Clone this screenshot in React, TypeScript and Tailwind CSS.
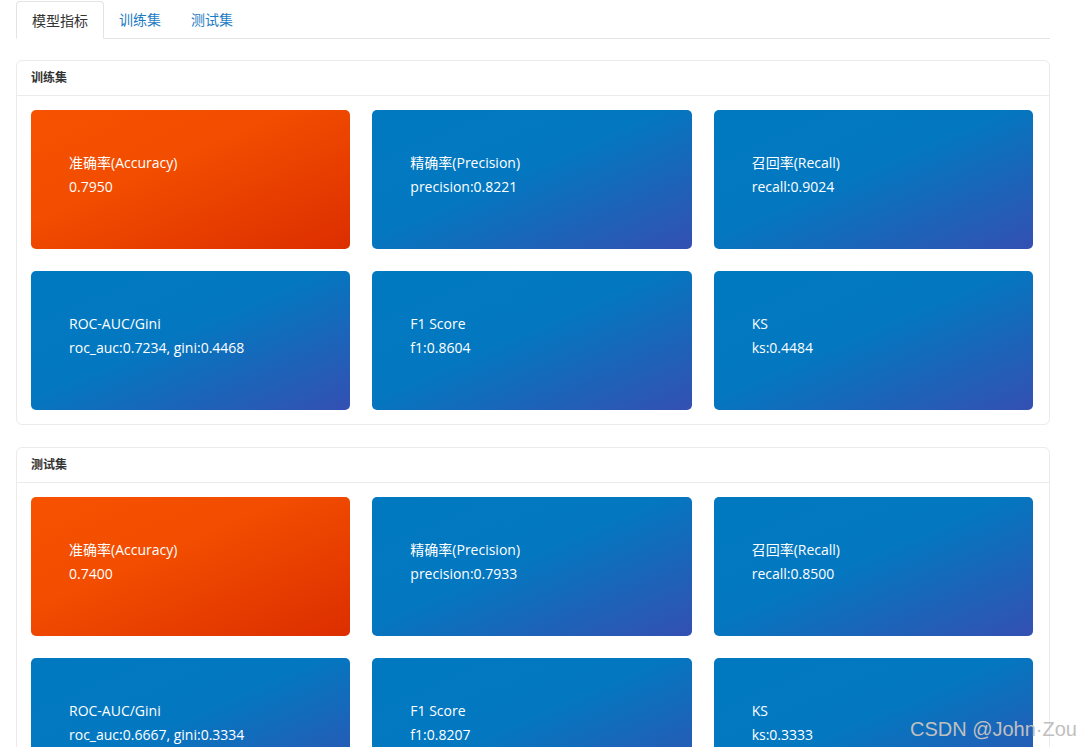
import React from "react";

type M = { title: string; value: string; orange?: boolean };

const train: M[] = [
  { title: "准确率(Accuracy)", value: "0.7950", orange: true },
  { title: "精确率(Precision)", value: "precision:0.8221" },
  { title: "召回率(Recall)", value: "recall:0.9024" },
  { title: "ROC-AUC/Gini", value: "roc_auc:0.7234, gini:0.4468" },
  { title: "F1 Score", value: "f1:0.8604" },
  { title: "KS", value: "ks:0.4484" },
];

const test: M[] = [
  { title: "准确率(Accuracy)", value: "0.7400", orange: true },
  { title: "精确率(Precision)", value: "precision:0.7933" },
  { title: "召回率(Recall)", value: "recall:0.8500" },
  { title: "ROC-AUC/Gini", value: "roc_auc:0.6667, gini:0.3334" },
  { title: "F1 Score", value: "f1:0.8207" },
  { title: "KS", value: "ks:0.3333" },
];

function Card({ m }: { m: M }) {
  return (
    <div
      className={
        "h-[139px] rounded-[5px] pl-[38px] pt-[41px] text-white text-[14px] leading-[24px] " +
        (m.orange
          ? "bg-[linear-gradient(to_bottom_right,#f65200_0%,#f24d00_40%,#dc2e00_100%)]"
          : "bg-[linear-gradient(to_bottom_right,#0079c1_0%,#0378c0_45%,#3450b2_100%)]")
      }
    >
      <div>{m.title}</div>
      <div>{m.value}</div>
    </div>
  );
}

function Panel({ title, items }: { title: string; items: M[] }) {
  return (
    <div className="rounded-[6px] border border-[#ebebeb] bg-white">
      <div className="h-[35px] border-b border-[#ebebeb] px-[14px] flex items-center text-[12px] font-bold text-[#333]">
        {title}
      </div>
      <div className="grid grid-cols-3 gap-x-[22px] gap-y-[22px] pt-[14px] pb-[14px] pl-[14px] pr-[16px]">
        {items.map((m, i) => (
          <Card key={i} m={m} />
        ))}
      </div>
    </div>
  );
}

export default function App() {
  return (
    <div
      className="relative w-[1080px] h-[747px] overflow-hidden bg-white"
      style={{ fontFamily: '"Open Sans", "Noto Sans CJK SC", sans-serif' }}
    >
      <div className="ml-4 w-[1034px]">
        <div className="flex pt-px border-b border-[#e3e3e3] h-[39px] text-[14px]">
          <div className="-mb-px h-[38px] px-[15px] flex items-center border border-[#e3e3e3] border-b-white rounded-t-[4px] bg-white text-[#333]">
            模型指标
          </div>
          <div className="px-[15px] flex items-center text-[#1d7bc3]">训练集</div>
          <div className="px-[15px] flex items-center text-[#1d7bc3]">测试集</div>
        </div>
        <div className="mt-[21px] flex flex-col gap-[22px]">
          <Panel title="训练集" items={train} />
          <Panel title="测试集" items={test} />
        </div>
      </div>
      <div
        className="absolute right-[3px] top-[717px] text-[20px] text-[#c0c0c0] leading-[24px]"
        style={{ fontFamily: '"Liberation Sans", Arial, sans-serif' }}
      >
        CSDN @John·Zou
      </div>
    </div>
  );
}
